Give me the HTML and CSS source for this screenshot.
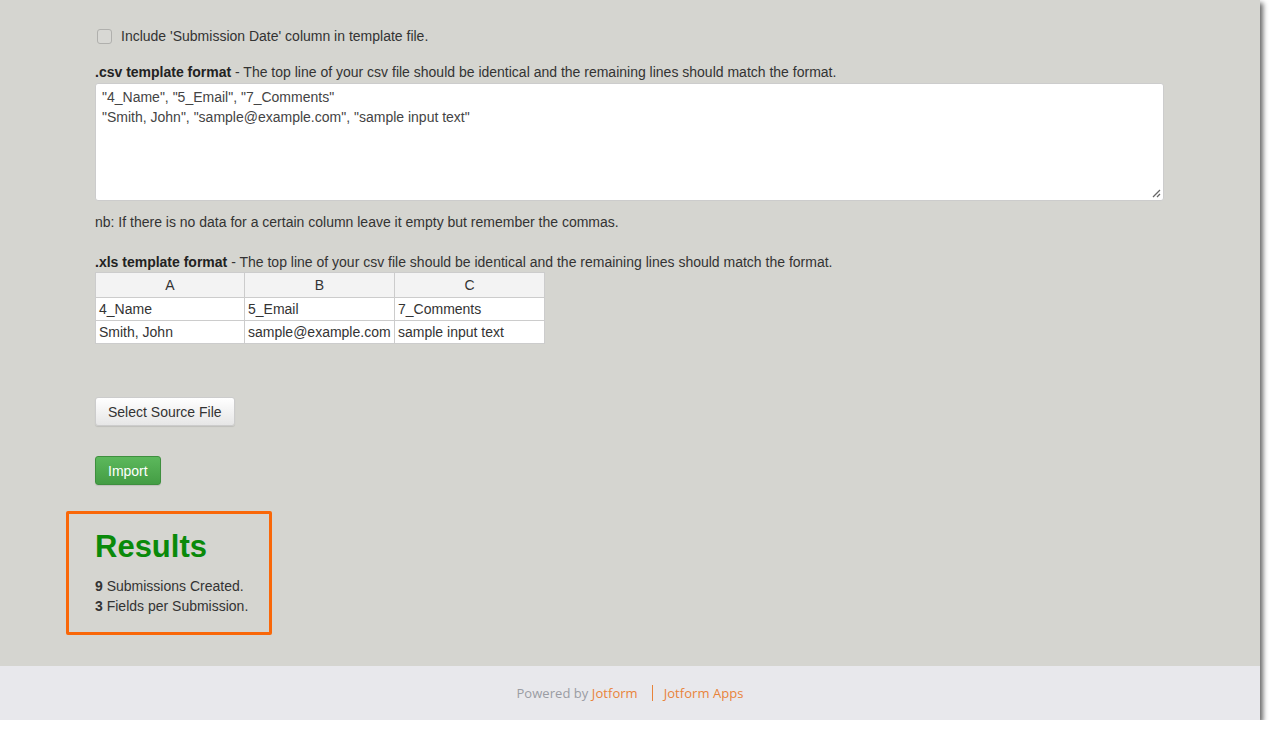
FILE: index.html
```html
<!DOCTYPE html>
<html>
<head>
<meta charset="utf-8">
<link rel="stylesheet" href="styles.css">
</head>
<body>
<div class="frame">
  <main class="content">
    <label class="check-row">
      <span class="checkbox"></span>
      <span>Include 'Submission Date' column in template file.</span>
    </label>

    <p class="label"><b>.csv template format</b> - The top line of your csv file should be identical and the remaining lines should match the format.</p>
    <div class="textarea">
      <div>"4_Name", "5_Email", "7_Comments"</div>
      <div>"Smith, John", "sample@example.com", "sample input text"</div>
      <svg class="grip" width="10" height="10" viewBox="0 0 10 10"><path d="M9 2 L2 9 M9 6 L6 9" stroke="#666" stroke-width="1.3" fill="none"/></svg>
    </div>
    <p class="note">nb: If there is no data for a certain column leave it empty but remember the commas.</p>

    <p class="label xls"><b>.xls template format</b> - The top line of your csv file should be identical and the remaining lines should match the format.</p>
    <table class="sheet">
      <tr><th>A</th><th>B</th><th>C</th></tr>
      <tr><td>4_Name</td><td>5_Email</td><td>7_Comments</td></tr>
      <tr><td>Smith, John</td><td>sample@example.com</td><td>sample input text</td></tr>
    </table>

    <div class="btn-row"><button class="btn">Select Source File</button></div>
    <div class="btn-row"><button class="btn green">Import</button></div>

    <section class="results">
      <h2>Results</h2>
      <div><b>9</b> Submissions Created.</div>
      <div><b>3</b> Fields per Submission.</div>
    </section>
  </main>
  <footer class="footer">
    <span class="muted">Powered by <span class="brand">Jotform</span></span>
    <span class="sep"></span>
    <span class="brand">Jotform Apps</span>
  </footer>
</div>
</body>
</html>
```

FILE: styles.css
```css
html, body {
  margin: 0;
  padding: 0;
  background: #ffffff;
}
body {
  font-family: "Liberation Sans", Arial, sans-serif;
  font-size: 14px;
  color: #333;
}
.frame {
  width: 1260px;
  height: 720px;
  background: #d5d5d0;
  display: flex;
  flex-direction: column;
  box-shadow: 3px 3px 5px rgba(0,0,0,0.6);
}
.content {
  flex: 1;
  padding: 28px 0 0 95px;
}
.check-row {
  display: flex;
  align-items: center;
  gap: 9px;
  height: 16px;
  margin-left: 2px;
}
.checkbox {
  width: 13px;
  height: 13px;
  border: 1px solid #b0b0ad;
  border-radius: 3px;
  background: #d8d8d4;
}
.label {
  margin: 20px 0 0 0;
  line-height: 16px;
}
.label b { color: #222; }
.textarea {
  position: relative;
  margin-top: 3px;
  width: 1055px;
  height: 104px;
  background: #fff;
  border: 1px solid #ccc;
  border-radius: 3px;
  padding: 3px 6px 9px 6px;
  line-height: 20px;
  color: #444;
}
.grip {
  position: absolute;
  right: 2px;
  bottom: 2px;
}
.note {
  margin: 13px 0 0 0;
  line-height: 16px;
}
.xls { margin-top: 24px; }
.sheet {
  margin-top: 2px;
  border-collapse: collapse;
  background: #fff;
}
.sheet th, .sheet td {
  border: 1px solid #ccc;
  padding: 0 3px;
  height: 22px;
  font-weight: normal;
  color: #333;
  text-align: left;
}
.sheet th {
  background: #f3f3f3;
  text-align: center;
  height: 24px;
}
.sheet td:nth-child(1), .sheet th:nth-child(1) { width: 142px; }
.sheet td:nth-child(2), .sheet th:nth-child(2) { width: 143px; }
.sheet td:nth-child(3), .sheet th:nth-child(3) { width: 143px; }
.btn-row { margin-top: 53px; }
.btn-row + .btn-row { margin-top: 30px; }
.btn {
  font-family: "Liberation Sans", Arial, sans-serif;
  font-size: 14px;
  height: 29px;
  padding: 0 12px;
  border: 1px solid #ccc;
  border-radius: 3px;
  background: linear-gradient(#fff, #e6e6e6);
  color: #333;
  box-shadow: 0 1px 1px rgba(0,0,0,0.1);
}
.btn.green {
  height: 29px;
  padding: 0 12px;
  background: linear-gradient(#5cb85c, #449d44);
  border-color: #3e8f3e;
  color: #fff;
}
.results {
  margin: 26px 0 0 -29px;
  width: 174px;
  height: 115px;
  border: 3px solid #f96708;
  border-radius: 2px;
  padding: 3px 0 0 26px;
  line-height: 20px;
}
.results h2 {
  margin: 12px 0 11px 0;
  font-size: 31px;
  line-height: 36px;
  color: #0a8a0a;
  font-weight: bold;
}
.footer {
  height: 54px;
  background: #e8e8ec;
  display: flex;
  align-items: center;
  justify-content: center;
  font-family: "Open Sans", sans-serif;
  font-size: 13px;
  letter-spacing: 0.05px;
  padding-left: 0;
}
.muted { color: #9a9ca3; }
.brand { color: #e8833a; }
.sep {
  width: 1px;
  height: 16px;
  background: #e8833a;
  margin: 0 11px 0 14px;
}
```
